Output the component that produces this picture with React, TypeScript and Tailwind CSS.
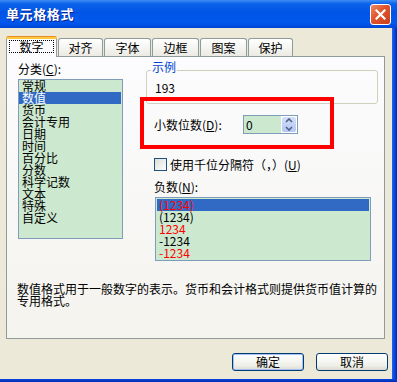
import React from "react";

const categories = ["常规", "数值", "货币", "会计专用", "日期", "时间", "百分比", "分数", "科学记数", "文本", "特殊", "自定义"];

const negatives = [
  { text: "(1234)", red: true },
  { text: "(1234)", red: false },
  { text: "1234", red: true },
  { text: "-1234", red: false },
  { text: "-1234", red: true },
];

const tabs = [
  { label: "对齐", w: "w-[45px]" },
  { label: "字体", w: "w-[47px]" },
  { label: "边框", w: "w-[47px]" },
  { label: "图案", w: "w-[47px]" },
  { label: "保护", w: "w-[45px]" },
];

function TitleBar() {
  return (
    <div className="flex h-[28px] items-center justify-between pl-[6px] pr-[6px] bg-[linear-gradient(to_bottom,#3d8df5_0%,#0b60ea_14%,#0055e5_45%,#0058ee_80%,#0047d6_100%)]">
      <span className="text-[13px] font-bold leading-[14px] tracking-[0.6px] text-white [text-shadow:1px_1px_#0a1f8f]">单元格格式</span>
      <div className="grid h-[21px] w-[21px] place-items-center rounded-[3px] border border-white bg-[linear-gradient(135deg,#ee8a66,#e0522b_45%,#c9401c)]">
        <svg width="11" height="11" viewBox="0 0 11 11">
          <path d="M1.5 1.5 L9.5 9.5 M9.5 1.5 L1.5 9.5" stroke="white" strokeWidth="2.2" strokeLinecap="square" />
        </svg>
      </div>
    </div>
  );
}

function Tabs() {
  return (
    <div className="relative z-10 flex h-[20px] items-end gap-[1px]">
      <div className="-mb-[1px] flex h-[21px] w-[51px] flex-col items-center rounded-t-[3px] border-x border-[#919b9c] bg-[#fcfcfe]">
        <div className="h-[3px] w-[calc(100%+2px)] -mx-[1px] rounded-t-[3px] bg-[linear-gradient(to_bottom,#e68b2c_0%,#e68b2c_33%,#ffc73c_34%,#ffc73c_100%)]" />
        <span className="mt-[1px] flex h-[13px] w-[45px] items-center justify-center border border-dotted border-black">数字</span>
      </div>
      {tabs.map((t) => (
        <div
          key={t.label}
          className={`flex h-[18px] ${t.w} items-center justify-center rounded-t-[3px] border border-b-0 border-[#919b9c] bg-[linear-gradient(to_bottom,#ffffff,#f3f3ef_60%,#ebeae3)] pt-[1px]`}
        >
          {t.label}
        </div>
      ))}
    </div>
  );
}

function Spinner() {
  return (
    <div className="flex h-[19px] w-[55px] border border-[#7f9db9]">
      <div className="flex flex-1 items-center bg-[#cce8cf] pl-[2px]">0</div>
      <div className="flex w-[16px] flex-col bg-white p-[1px]">
        <div className="flex flex-1 flex-col items-center justify-center gap-[3px] rounded-[2px] bg-[linear-gradient(to_bottom,#d3defa,#b4c6f3)]">
          <svg width="8" height="5" viewBox="0 0 8 5">
            <path d="M1 4 L4 1 L7 4" stroke="#4d6185" strokeWidth="1.6" fill="none" />
          </svg>
          <svg width="8" height="5" viewBox="0 0 8 5">
            <path d="M1 1 L4 4 L7 1" stroke="#4d6185" strokeWidth="1.6" fill="none" />
          </svg>
        </div>
      </div>
    </div>
  );
}

function Panel() {
  return (
    <div className="relative mr-[3px] flex h-[283px] flex-col border border-[#919b9c] bg-[linear-gradient(to_bottom,#fcfcfe,#f4f3ee)]">
      <div className="flex pl-[11px]">
        <div className="flex w-[105px] flex-col pt-[6px]">
          <span>
            分类(<u>C</u>):
          </span>
          <div className="mt-[4px] h-[160px] border border-[#7f9db9] bg-[#cce8cf]">
            {categories.map((c, i) => (
              <div
                key={c}
                className={`h-[12px] pl-[3px] leading-[12px] ${i === 1 ? "mr-[1px] bg-[#316ac5] text-white" : ""}`}
              >
                {c}
              </div>
            ))}
          </div>
        </div>

        <div className="ml-[23px] flex w-[232px] flex-col pt-[4px]">
          <span className="relative z-10 ml-[5px] w-fit bg-[#fbfbfb] px-[1px] text-[#0046d5]">示例</span>
          <div className="-mt-[3px] h-[34px] rounded-[3px] border border-[#d0d0bf] pl-[8px] pt-[11px]">193</div>

          <div className="mt-[11px] flex h-[19px] items-center pl-[8px]">
            <span className="w-[89px]">
              小数位数(<u>D</u>):
            </span>
            <Spinner />
          </div>

          <div className="mt-[24px] flex h-[13px] items-center pl-[8px]">
            <div className="h-[13px] w-[13px] border border-[#1c5180] bg-[linear-gradient(135deg,#dcdcd7,#ffffff)]" />
            <span className="ml-[3px]">
              使用千位分隔符（，）(<u>U</u>)
            </span>
          </div>

          <span className="mt-[10px] pl-[8px]">
            负数(<u>N</u>):
          </span>
          <div className="ml-[9px] mt-[4px] h-[64px] w-[216px] border border-[#7f9db9] bg-[#cce8cf] p-[1px]">
            {negatives.map((n, i) => (
              <div
                key={i}
                className={`h-[12px] pl-[2px] leading-[12px] ${i === 0 ? "bg-[#316ac5]" : ""} ${n.red ? "text-[#ff0000]" : "text-black"}`}
              >
                {n.text}
              </div>
            ))}
          </div>
        </div>
      </div>

      <p className="mt-[22px] whitespace-nowrap pl-[10px] leading-[12px]">
        数值格式用于一般数字的表示。货币和会计格式则提供货币值计算的
        <br />
        专用格式。
      </p>

      <div className="pointer-events-none absolute left-[133px] top-[40px] h-[52px] w-[194px] border-4 border-[#ff0000]" />
    </div>
  );
}

export default function App() {
  return (
    <div className="flex h-[382px] w-[397px] flex-col overflow-hidden bg-[#ece9d8] font-['Noto_Sans_CJK_SC',sans-serif] text-[12px] leading-[12px] text-black">
      <TitleBar />
      <div className="flex min-h-0 flex-1">
        <div className="flex flex-1 flex-col pl-[6px] pr-[4px] pt-[8px]">
          <Tabs />
          <Panel />
          <div className="mt-[14px] flex justify-end gap-[12px]">
            <button className="flex h-[18px] w-[72px] items-center justify-center rounded-[3px] border border-[#003c74] bg-[linear-gradient(to_bottom,#ffffff,#f0f0ea_70%,#dcdad0)] shadow-[inset_0_0_0_1px_#a4bff2]">
              确定
            </button>
            <button className="flex h-[18px] w-[72px] items-center justify-center rounded-[3px] border border-[#003c74] bg-[linear-gradient(to_bottom,#ffffff,#f0f0ea_70%,#dcdad0)]">
              取消
            </button>
          </div>
        </div>
        <div className="w-[5px] bg-[linear-gradient(to_right,#1f66ee,#0a48dc,#0029b5)]" />
      </div>
      <div className="h-[3px] bg-[linear-gradient(to_bottom,#0a48dc,#0029b5)]" />
    </div>
  );
}
